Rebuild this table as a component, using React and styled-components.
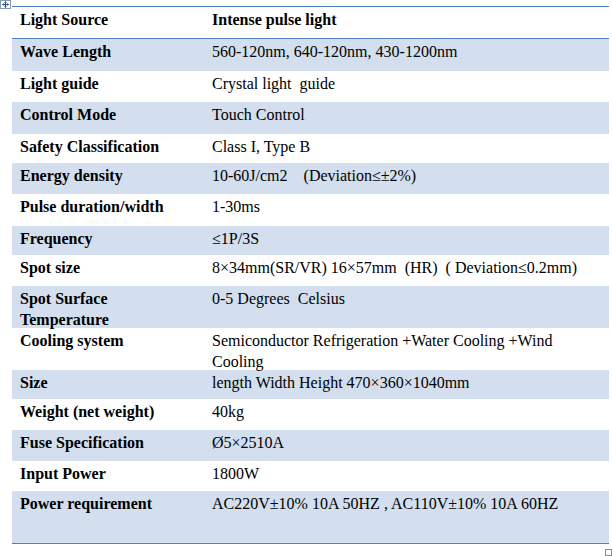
import React from 'react'
import styled, { createGlobalStyle } from 'styled-components'

const GlobalStyle = createGlobalStyle`
	html, body {
		margin: 0;
		padding: 0;
		background: #ffffff;
	}
	body {
		font-family: "Liberation Serif", "Times New Roman", serif;
		font-size: 16px;
		color: #000000;
	}
`

const Page = styled.div`
	position: relative;
	width: 612px;
	height: 556px;
	padding: 6px 3px 0 12px;
	box-sizing: border-box;
`

const MoveHandle = styled.svg`
	position: absolute;
	left: 0;
	top: 0;
`

const ResizeHandle = styled.div`
	position: absolute;
	left: 605px;
	top: 549px;
	width: 5px;
	height: 5px;
	border: 1px solid #8a8a8a;
	background: #ffffff;
`

const Table = styled.div`
	border-top: 1px solid #4f81bd;
	border-bottom: 1px solid #4f81bd;
`

const Row = styled.div`
	display: grid;
	grid-template-columns: 192px 1fr;
	height: ${p => p.h}px;
	background: ${p => (p.shaded ? '#d3dfee' : '#ffffff')};
	border-bottom: ${p => (p.head ? '1px solid #4f81bd' : 'none')};
	box-sizing: border-box;
`

const Cell = styled.div`
	padding: 2px 8px 0 8px;
	line-height: 21px;
	font-weight: ${p => (p.bold ? 700 : 400)};
	white-space: pre-wrap;
`

const rows = [
	['Wave Length', '560-120nm, 640-120nm, 430-1200nm', 32],
	['Light guide', 'Crystal light  guide', 31],
	['Control Mode', 'Touch Control', 32],
	['Safety Classification', 'Class I, Type B', 29],
	['Energy density', '10-60J/cm2    (Deviation≤±2%)', 31],
	['Pulse duration/width', '1-30ms', 32],
	['Frequency', '≤1P/3S', 29],
	['Spot size', '8×34mm(SR/VR) 16×57mm  (HR)  ( Deviation≤0.2mm)', 31],
	['Spot Surface Temperature', '0-5 Degrees  Celsius', 42],
	['Cooling system', 'Semiconductor Refrigeration +Water Cooling +Wind Cooling', 42],
	['Size', 'length Width Height 470×360×1040mm', 29],
	['Weight (net weight)', '40kg', 31],
	['Fuse Specification', 'Ø5×2510A', 31],
	['Input Power', '1800W', 30],
	['Power requirement', 'AC220V±10% 10A 50HZ , AC110V±10% 10A 60HZ', 52],
]

const App = () => {
	return <Page>
		<GlobalStyle />
		<MoveHandle width="11" height="9" viewBox="0 0 11 9">
			<rect x="0.5" y="0.5" width="10" height="8" fill="#ffffff" stroke="#8a9bb8" />
			<path d="M5.5 1.5v6M2.5 4.5h6M4.5 2.5l1-1 1 1M4.5 6.5l1 1 1-1M3.5 3.5l-1 1 1 1M7.5 3.5l1 1-1 1" stroke="#2f4f8f" fill="none" strokeWidth="1" />
		</MoveHandle>
		<Table>
			<Row head h={32}>
				<Cell bold>Light Source</Cell>
				<Cell bold>Intense pulse light</Cell>
			</Row>
			{rows.map(([name, value, h], i) => (
				<Row key={name} h={h} shaded={i % 2 === 0}>
					<Cell bold>{name}</Cell>
					<Cell>{value}</Cell>
				</Row>
			))}
		</Table>
		<ResizeHandle />
	</Page>
}

export default App
